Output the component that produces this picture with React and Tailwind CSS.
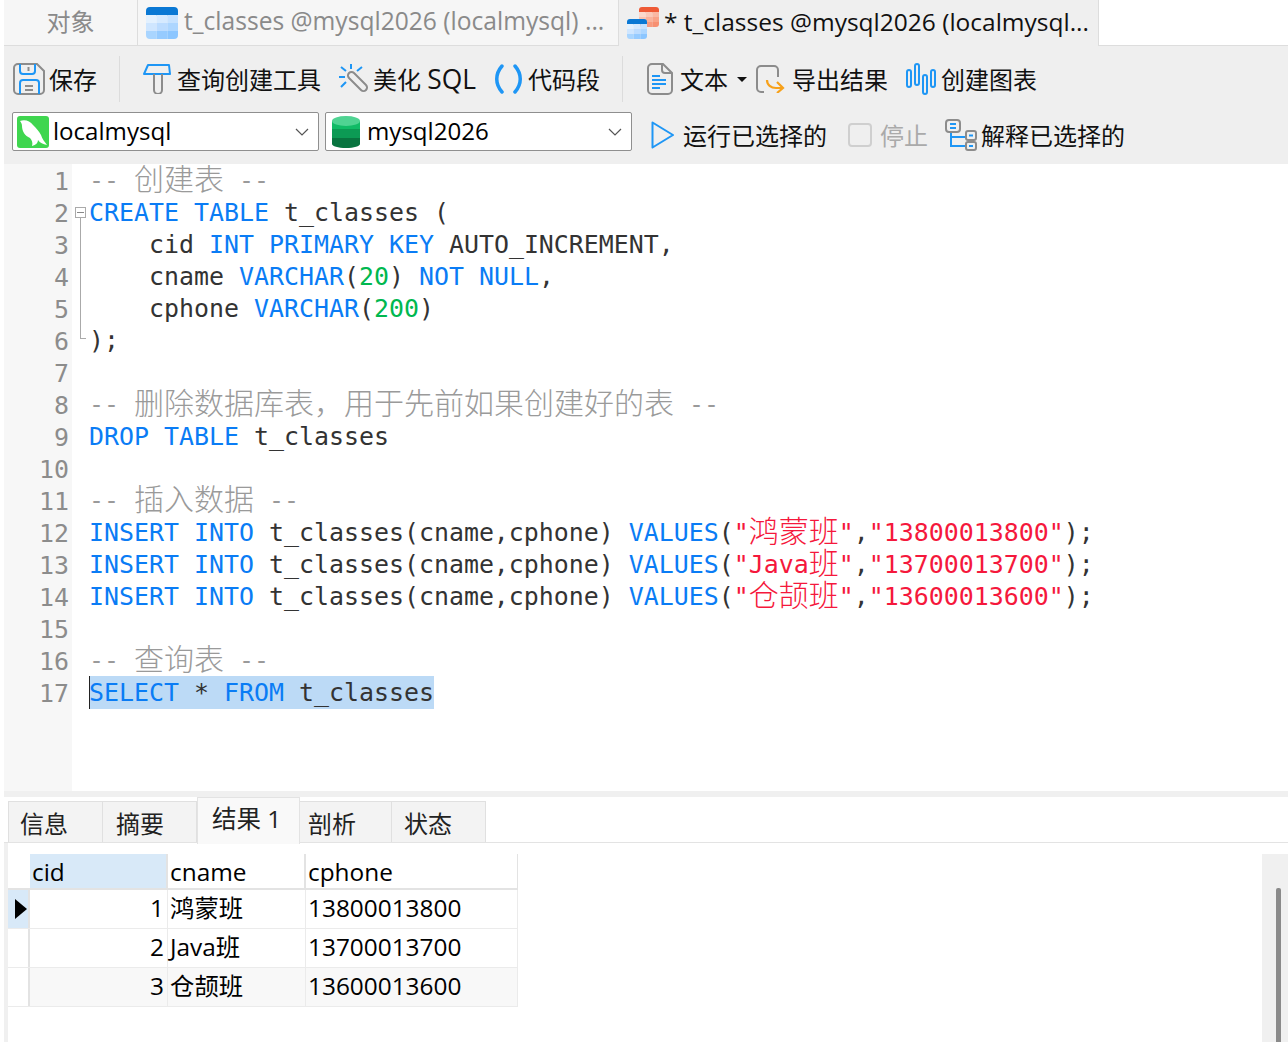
import { useId } from "react";

const uiFont = "font-['Open_Sans','Noto_Sans_CJK_SC',sans-serif]";
const monoFont = "font-['DejaVu_Sans_Mono','Noto_Sans_CJK_SC',monospace]";

// Syntax token helpers
const K = ({ children }) => <span className="text-[#0a7cf5]">{children}</span>;
const N = ({ children }) => <span className="text-[#00b84f]">{children}</span>;
const S = ({ children }) => <span className="text-[#f5183c]">{children}</span>;
const C = ({ children }) => <span className="text-[#9a9a9a]">{children}</span>;
const H = ({ children }) => <span className="relative top-[1px] font-['Noto_Sans_CJK_SC',sans-serif] text-[30px] leading-[0] font-light">{children}</span>;

const lines = [
  <C>-- <H>创建表</H> --</C>,
  <><K>CREATE TABLE</K> t_classes (</>,
  <>    cid <K>INT PRIMARY KEY</K> AUTO_INCREMENT,</>,
  <>    cname <K>VARCHAR</K>(<N>20</N>) <K>NOT NULL</K>,</>,
  <>    cphone <K>VARCHAR</K>(<N>200</N>)</>,
  <>);</>,
  "",
  <C>-- <H>删除数据库表，用于先前如果创建好的表</H> --</C>,
  <><K>DROP TABLE</K> t_classes</>,
  "",
  <C>-- <H>插入数据</H> --</C>,
  <><K>INSERT INTO</K> t_classes(cname,cphone) <K>VALUES</K>(<S>"<H>鸿蒙班</H>"</S>,<S>"13800013800"</S>);</>,
  <><K>INSERT INTO</K> t_classes(cname,cphone) <K>VALUES</K>(<S>"Java<H>班</H>"</S>,<S>"13700013700"</S>);</>,
  <><K>INSERT INTO</K> t_classes(cname,cphone) <K>VALUES</K>(<S>"<H>仓颉班</H>"</S>,<S>"13600013600"</S>);</>,
  "",
  <C>-- <H>查询表</H> --</C>,
  <span className="bg-[#bcdaf6] py-[2px] shadow-[inset_1px_0_0_#222]"><K>SELECT</K> * <K>FROM</K> t_classes</span>,
];

const rows = [
  { id: 1, name: "鸿蒙班", phone: "13800013800" },
  { id: 2, name: "Java班", phone: "13700013700" },
  { id: 3, name: "仓颉班", phone: "13600013600" },
];

const blueCells = ["#e3f1ff", "#d6eaff", "#c6e2ff", "#cfe6ff", "#bcdcff", "#add6ff", "#a9d5ff", "#96cbff", "#8cc6ff"];
const redCells = ["#fcd9cc", "#fbc9b8", "#fab8a3", "#fbc4b0", "#fab29b", "#f9a388", "#f9a890", "#f89a7e", "#f79072"];

// Small spreadsheet tile used by the tab icons
function Grid({ x, y, size, head, cells, radius }) {
  const id = useId();
  const cellW = size / 3;
  const cellH = (size - size / 4) / 3;
  return (
    <g>
      <clipPath id={id}><rect x={x} y={y} width={size} height={size} rx={radius} /></clipPath>
      <g clipPath={`url(#${id})`}>
        <rect x={x} y={y} width={size} height={size / 4 + 0.5} fill={head} />
        {cells.map((c, i) => (
          <rect key={i} x={x + (i % 3) * cellW} y={y + size / 4 + Math.floor(i / 3) * cellH} width={cellW} height={cellH} fill={c} />
        ))}
      </g>
    </g>
  );
}

function TableIcon() {
  return (
    <svg width="32" height="32" viewBox="0 0 32 32" className="shrink-0">
      <Grid x={0} y={0} size={32} head="#0a78d4" cells={blueCells} radius={4} />
    </svg>
  );
}

function ActiveTabIcon() {
  return (
    <svg width="32" height="32" viewBox="0 0 32 32" className="shrink-0">
      <Grid x={12} y={0} size={20} head="#ee5a36" cells={redCells} radius={3} />
      <Grid x={0} y={12} size={20} head="#0a78d4" cells={blueCells} radius={3} />
    </svg>
  );
}

function SaveIcon() {
  return (
    <svg width="32" height="32" viewBox="0 0 32 32" fill="none" strokeWidth="2" className="shrink-0">
      <path d="M5 1h19l7 7v19a4 4 0 0 1-4 4H5a4 4 0 0 1-4-4V5a4 4 0 0 1 4-4z" stroke="#8c8c8c" />
      <path d="M7 1v7a3 3 0 0 0 3 3h9a3 3 0 0 0 3-3V1" stroke="#1e96f5" />
      <path d="M15.500 4v4" stroke="#8c8c8c" />
      <path d="M7 31V20a3 3 0 0 1 3-3h13a3 3 0 0 1 3 3v11" stroke="#1e96f5" />
      <path d="M12 23h8M12 27h8" stroke="#8c8c8c" />
    </svg>
  );
}

function QueryIcon() {
  return (
    <svg width="28" height="30" viewBox="0 0 28 30" fill="none" strokeWidth="2" className="shrink-0">
      <path d="M5 1h21l1 9H1z" stroke="#1e96f5" strokeLinejoin="round" />
      <path d="M11 10v16a4 4 0 0 0 8 0V10" stroke="#8c8c8c" />
    </svg>
  );
}

function BeautifyIcon() {
  return (
    <svg width="30" height="30" viewBox="0 0 30 30" fill="none" strokeWidth="2" className="shrink-0">
      <path d="M15 9l12 12a3.500 3.500 0 0 1-5 5L10 14a3.500 3.500 0 0 1 5-5z" stroke="#8c8c8c" />
      <path d="M12 0v5M0 13h6M2 3l5 4M23 3l-5 4M2 23l5-5" stroke="#1e96f5" />
    </svg>
  );
}

function SnippetIcon() {
  return (
    <svg width="29" height="30" viewBox="0 0 29 30" fill="none" stroke="#1e96f5" strokeWidth="3.500" strokeLinecap="round" className="shrink-0">
      <path d="M8 2C1 10 1 20 8 28" />
      <path d="M21 2c7 8 7 18 0 26" />
    </svg>
  );
}

function TextIcon() {
  return (
    <svg width="26" height="32" viewBox="0 0 26 32" fill="none" strokeWidth="2" className="shrink-0">
      <path d="M5 1h11l9 9v17a4 4 0 0 1-4 4H5a4 4 0 0 1-4-4V5a4 4 0 0 1 4-4z" stroke="#8c8c8c" />
      <path d="M15 1v6a3 3 0 0 0 3 3h7" stroke="#8c8c8c" />
      <path d="M5 13h8M5 17h14M5 21h14M5 25h8" stroke="#1e96f5" />
    </svg>
  );
}

function ExportIcon() {
  return (
    <svg width="29" height="28" viewBox="0 0 29 28" fill="none" strokeWidth="2" className="shrink-0">
      <path d="M8 27H5a4 4 0 0 1-4-4V5a4 4 0 0 1 4-4h13a4 4 0 0 1 4 4v7" stroke="#8c8c8c" />
      <path d="M11 15c0 5 4 8 9 8h7M21 17l6 6-6 5" stroke="#f7a11a" strokeWidth="2.200" />
    </svg>
  );
}

function ChartIcon() {
  return (
    <svg width="30" height="32" viewBox="0 0 30 32" fill="none" stroke="#1e96f5" strokeWidth="2" className="shrink-0">
      <rect x="1" y="7" width="4" height="17" rx="2" />
      <rect x="9" y="1" width="4" height="21" rx="2" />
      <rect x="17" y="12" width="4" height="19" rx="2" />
      <rect x="25" y="7" width="4" height="17" rx="2" />
    </svg>
  );
}

function PlayIcon() {
  return (
    <svg width="23" height="28" viewBox="0 0 23 28" fill="none" className="shrink-0">
      <path d="M1.500 1.500L22 14 1.500 26.500z" stroke="#1e96f5" strokeWidth="2" strokeLinejoin="round" />
    </svg>
  );
}

function ExplainIcon() {
  return (
    <svg width="32" height="32" viewBox="0 0 32 32" fill="none" strokeWidth="2" className="shrink-0">
      <path d="M6 14v13h15M6 18h15" stroke="#1e96f5" />
      <rect x="1" y="1" width="14" height="12" rx="3" stroke="#8c8c8c" />
      <path d="M5 5h6M5 9h6" stroke="#1e96f5" />
      <rect x="21" y="12" width="10" height="9" rx="2" stroke="#8c8c8c" />
      <rect x="21" y="23" width="10" height="8" rx="2" stroke="#8c8c8c" />
      <path d="M24 16.500h4M24 27h4" stroke="#1e96f5" />
    </svg>
  );
}

function MysqlIcon() {
  return (
    <svg width="32" height="32" viewBox="0 0 32 32" className="shrink-0">
      <rect width="32" height="32" rx="3" fill="#3fd64f" />
      <path d="M3 5C8 3 13 5 16 9c3 3 6 6 8 10 1 4 4 7 6 10-4-1-7-2-9-5 0 3-2 5-6 6 1-3 0-6-2-8-5-2-8-7-8-12 0-2-1-4-2-5z" fill="#fff" />
    </svg>
  );
}

function DbIcon() {
  return (
    <svg width="28" height="32" viewBox="0 0 28 32" className="shrink-0">
      <path d="M0 5h28v8H0z" fill="#10bb66" />
      <path d="M0 13h28v9H0z" fill="#0c9a54" />
      <path d="M0 22h28v6c0 2-6 4-14 4S0 30 0 28z" fill="#08743f" />
      <ellipse cx="14" cy="5" rx="14" ry="5" fill="#4fd392" />
    </svg>
  );
}

function Chevron() {
  return (
    <svg width="14" height="8" viewBox="0 0 14 8" fill="none" stroke="#555" strokeWidth="1.200" className="shrink-0">
      <path d="M1 1l6 6 6-6" />
    </svg>
  );
}

function Combo({ icon, label, className }) {
  return (
    <div className={`flex h-[39px] w-[307px] items-center rounded-[2px] border border-[#8f8f8f] bg-white pr-[9px] ${className}`}>
      {icon}
      <span className="flex-1 pb-px text-[24.100px] text-black">{label}</span>
      <Chevron />
    </div>
  );
}

function FoldMark({ line }) {
  if (line === 2) {
    return (
      <>
        <div className="absolute top-[10px] left-[3px] flex h-[11px] w-[11px] items-center justify-center border border-[#aaa] bg-white">
          <div className="h-px w-[7px] bg-[#888]" />
        </div>
        <div className="absolute top-[21px] bottom-0 left-[8px] w-px bg-[#aaa]" />
      </>
    );
  }
  if (line >= 3 && line <= 5) return <div className="absolute inset-y-0 left-[8px] w-px bg-[#aaa]" />;
  if (line === 6) return <div className="absolute top-0 left-[8px] h-[14px] w-[6px] border-b border-l border-[#aaa]" />;
  return null;
}

function ResultTab({ label, className, active }) {
  if (active) {
    return (
      <div className="z-10 -mb-[2px] flex h-[47px] w-[103px] items-center border-x border-t border-[#e3e3e3] bg-[#f9f9f9] pb-[3px] pl-[14px] text-[24.500px] text-[#222]">
        {label}
      </div>
    );
  }
  return (
    <div className={`flex h-[41px] items-center border-t border-r border-[#e0e0e0] bg-[#f3f3f3] pt-[3px] text-[24px] text-[#222] ${className}`}>
      {label}
    </div>
  );
}

export default function App() {
  return (
    <div className={`flex h-[1042px] w-[1288px] flex-col overflow-hidden bg-white pl-1 ${uiFont}`}>
      {/* Tabs */}
      <div className="flex h-[46px] shrink-0 text-[24.600px]">
        <div className="flex w-[134px] items-center justify-center border-r border-b border-[#ddd] bg-[#f6f6f6] pb-[2px] text-[24px] text-[#8a8a8a]">对象</div>
        <div className="flex w-[481px] items-center border-r border-b border-[#ddd] bg-[#f6f6f6] pl-[8px] text-[#8a8a8a]">
          <TableIcon />
          <span className="ml-[6px] pb-[2px]">t_classes @mysql2026 (localmysql) ...</span>
        </div>
        <div className="flex w-[480px] items-center border-r border-[#ddd] bg-[#efefef] pl-[8px] text-[#111]">
          <ActiveTabIcon />
          <span className="ml-[5px] pb-[2px] text-[24.500px]">* t_classes @mysql2026 (localmysql...</span>
        </div>
        <div className="flex-1 border-b border-[#ddd] bg-white" />
      </div>

      {/* Toolbars */}
      <div className="h-[118px] shrink-0 bg-[#efefef] text-[24px] text-[#111]">
        <div className="flex h-[66px] items-center pl-[9px]">
          <SaveIcon />
          <span className="ml-[4px] pt-[2px]">保存</span>
          <div className="mr-[23px] ml-[22px] h-[46px] w-px bg-[#dcdcdc]" />
          <QueryIcon />
          <span className="ml-[6px] pt-[2px]">查询创建工具</span>
          <div className="ml-[18px]"><BeautifyIcon /></div>
          <span className="ml-[4px] w-[103px] pt-[2px]">美化 <span className="text-[26.400px] leading-none">SQL</span></span>
          <div className="ml-[18px]"><SnippetIcon /></div>
          <span className="ml-[5px] pt-[2px]">代码段</span>
          <div className="mr-[24px] ml-[22px] h-[46px] w-px bg-[#dcdcdc]" />
          <TextIcon />
          <span className="ml-[7px] pt-[2px]">文本</span>
          <div className="mx-[9px] h-0 w-0 border-x-[5px] border-t-[5px] border-x-transparent border-t-[#111]" />
          <ExportIcon />
          <span className="ml-[7px] pt-[2px]">导出结果</span>
          <div className="ml-[18px]"><ChartIcon /></div>
          <span className="ml-[5px] pt-[2px]">创建图表</span>
        </div>
        <div className="flex items-start pl-[8px]">
          <Combo icon={<div className="mr-[4px] ml-[4px]"><MysqlIcon /></div>} label="localmysql" />
          <Combo icon={<div className="mr-[7px] ml-[6px]"><DbIcon /></div>} label="mysql2026" className="ml-[6px]" />
          <div className="ml-[19px] flex h-[46px] items-center">
            <PlayIcon />
            <span className="ml-[9px] pt-[2px]">运行已选择的</span>
            <div className="ml-[21px] h-[24px] w-[24px] rounded-[4px] border-2 border-[#cfcfcf]" />
            <span className="ml-[8px] pt-[2px] text-[#aaa]">停止</span>
            <div className="ml-[17px]"><ExplainIcon /></div>
            <span className="ml-[4px] pt-[2px]">解释已选择的</span>
          </div>
        </div>
      </div>

      {/* Editor */}
      <div className={`flex h-[627px] shrink-0 flex-col bg-white text-[24.920px] text-[#333] ${monoFont}`}>
        <div className="h-px w-[68px] shrink-0 bg-[#f7f7f7]" />
        {lines.map((line, i) => (
          <div key={i} className="flex h-[32px] shrink-0">
            <div className="w-[68px] bg-[#f7f7f7] pt-px pr-[3px] text-right leading-[32px] text-[#8c8c8c]">{i + 1}</div>
            <div className="relative w-[17px]"><FoldMark line={i + 1} /></div>
            <pre className={`leading-[32px] whitespace-pre ${monoFont}`}>{line}</pre>
          </div>
        ))}
        <div className="w-[68px] flex-1 bg-[#f7f7f7]" />
      </div>

      {/* Splitter */}
      <div className="h-[6px] shrink-0 bg-[#f0f0f0]" />

      {/* Result tabs */}
      <div className="flex h-[46px] shrink-0 items-end border-b border-[#e3e3e3] pl-1">
        <ResultTab label="信息" className="w-[95px] border-l pl-[11px]" />
        <ResultTab label="摘要" className="w-[94px] pl-[13px]" />
        <ResultTab label="结果 1" active />
        <ResultTab label="剖析" className="w-[92px] pl-[8px]" />
        <ResultTab label="状态" className="w-[94px] pl-[12px]" />
      </div>

      {/* Result grid */}
      <div className="flex min-h-0 flex-1 border-l-[4px] border-[#f0f0f0] pt-[11px] text-[24.400px] text-black">
        <div className="w-[510px] shrink-0">
          <div className="flex h-[36px] border-b-2 border-[#e3e3e3]">
            <div className="w-[22px]" />
            <div className="w-[138px] border-r-2 border-[#e3e3e3] bg-[#d8e9f8] pl-[2px] leading-[36px]">cid</div>
            <div className="w-[138px] border-r-2 border-[#e3e3e3] pl-[2px] leading-[36px]">cname</div>
            <div className="flex-1 border-r border-[#e3e3e3] pl-[2px] leading-[36px]">cphone</div>
          </div>
          {rows.map((row, i) => (
            <div key={row.id} className={`flex h-[39px] border-b border-[#ebebeb] ${i === 2 ? "bg-[#f8f8f8]" : ""}`}>
              <div className={`flex w-[22px] items-center justify-center border-r-2 border-[#e3e3e3] ${i === 0 ? "bg-[#d8e9f8]" : i === 2 ? "bg-white" : ""}`}>
                {i === 0 && <div className="ml-[6px] h-0 w-0 border-y-[10px] border-l-[12px] border-y-transparent border-l-black" />}
              </div>
              <div className="w-[138px] border-r border-[#ebebeb] pr-[3px] text-right leading-[35px]">{row.id}</div>
              <div className="w-[138px] border-r border-[#ebebeb] pl-[2px] leading-[35px]">{row.name}</div>
              <div className="flex-1 border-r border-[#ebebeb] pl-[2px] leading-[35px]">{row.phone}</div>
            </div>
          ))}
        </div>
        <div className="flex-1" />
        <div className="flex w-[26px] shrink-0 justify-end bg-[#f0f0f0] pt-[34px] pr-[7px]">
          <div className="h-full w-[5px] rounded-t-[2px] bg-[#8a8a8a]" />
        </div>
      </div>
    </div>
  );
}
